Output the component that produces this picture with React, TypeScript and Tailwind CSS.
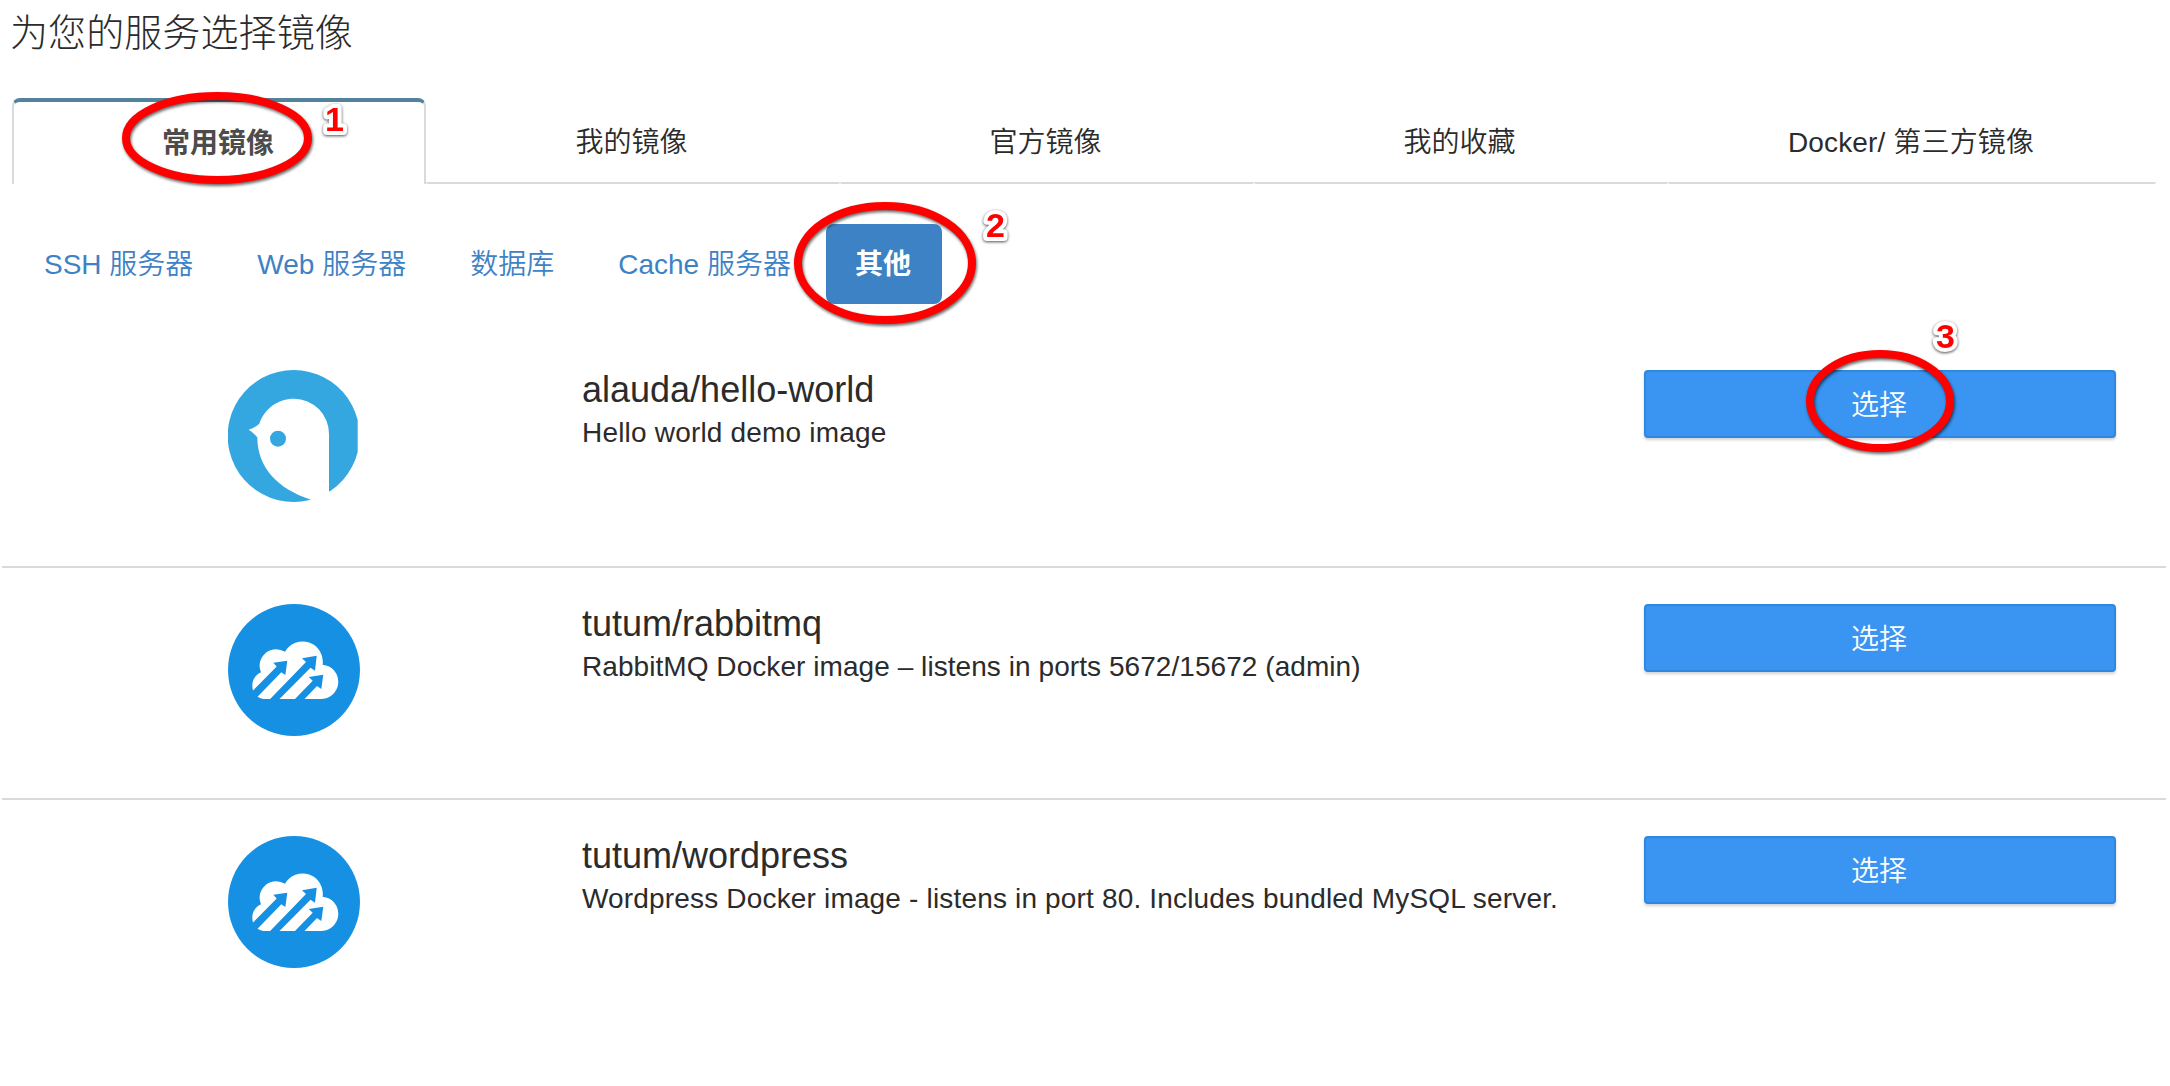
import React from "react";

function Ring({ w, h, className }: { w: number; h: number; className: string }) {
  return (
    <svg
      className={`pointer-events-none absolute z-10 overflow-visible drop-shadow-[1px_2px_1.5px_rgba(0,0,0,0.6)] ${className}`}
      width={w}
      height={h}
    >
      <ellipse cx={w / 2} cy={h / 2} rx={w / 2 - 4} ry={h / 2 - 4} fill="none" stroke="#ff0000" strokeWidth="8" />
    </svg>
  );
}

function Mark({ n, className }: { n: number; className: string }) {
  return (
    <svg
      className={`pointer-events-none absolute z-10 overflow-visible font-['Liberation_Sans',sans-serif] text-[34px] font-bold drop-shadow-[0_1px_1.5px_rgba(0,0,0,0.7)] ${className}`}
      width="19"
      height="24"
    >
      <text x="0" y="24" fill="#ff0000" stroke="#ffffff" strokeWidth="8" strokeLinejoin="round" paintOrder="stroke">
        {n}
      </text>
    </svg>
  );
}

function BirdLogo() {
  return (
    <svg width="132" height="132" viewBox="0 0 132 132">
      <path d="M129.700 50A66 66 0 1 0 129.700 82Z" fill="#35a7e0" />
      <path
        d="M101 135V64A35.200 35.200 0 0 0 66 28.700C50 28.700 36.500 38.500 31.300 53.700Q27 57.500 20.700 59.700Q25.500 62.500 29.300 67.300C29.500 98 50 119 83 129.800V135Z"
        fill="#fff"
      />
      <circle cx="50" cy="68.700" r="8" fill="#35a7e0" />
    </svg>
  );
}

function CloudLogo() {
  return (
    <svg width="132" height="132" viewBox="0 0 132 132">
      <circle cx="66" cy="66" r="66" fill="#1690e2" />
      <path
        d="M37 95H91.500A17.100 17.100 0 0 0 94.600 60.700A20.200 20.200 0 0 0 57 47.800A16.500 16.500 0 0 0 33 68.300C27 71 24.300 76 24.300 81.700C24.300 90 30 95 37 95Z"
        fill="#fff"
      />
      <g fill="#1690e2">
        <path d="M59.300 56.700L45.300 58.700L48.700 62.500L23 88.500L29.300 93L53.300 68.300L57.300 71Z" />
        <path d="M88.700 51.700L74 54.300L78 58L41.200 96H50.500L82.500 63.700L87 66.700Z" />
        <path d="M95.300 70.700L80.700 73L84.700 76.700L66 96H75.500L89 82L93.300 85Z" />
      </g>
    </svg>
  );
}

const tabs = ["我的镜像", "官方镜像", "我的收藏"];
const categories = ["SSH 服务器", "Web 服务器", "数据库", "Cache 服务器"];
const images = [
  {
    name: "alauda/hello-world",
    text: "Hello world demo image",
    tracking: "tracking-[0.19px]",
    logo: <BirdLogo />,
  },
  {
    name: "tutum/rabbitmq",
    text: "RabbitMQ Docker image – listens in ports 5672/15672 (admin)",
    tracking: "tracking-[0.06px]",
    logo: <CloudLogo />,
  },
  {
    name: "tutum/wordpress",
    text: "Wordpress Docker image - listens in port 80. Includes bundled MySQL server.",
    tracking: "tracking-[0.17px]",
    logo: <CloudLogo />,
  },
];

export default function App() {
  return (
    <div className="h-[1086px] w-[2170px] overflow-hidden bg-white font-['Liberation_Sans','Noto_Sans_CJK_SC',sans-serif] text-[28px] leading-[40px] text-[#2b2b2b]">
      <h1 className="flex h-[98px] items-start pt-[5px] pl-[10px] text-[38px] leading-[56px] font-light tracking-[0.1px]">
        为您的服务选择镜像
      </h1>

      <nav className="flex h-[86px] pl-[12px]">
        <div className="relative flex w-[414px] items-center justify-center rounded-t-[8px] border-x-2 border-t-4 border-x-[#dadada] border-t-[#53839a] pt-[2px] pr-[2px] font-bold text-[#4c4c4c]">
          常用镜像
          <Ring w={190} h={92} className="top-[-10px] left-[108px]" />
          <Mark n={1} className="top-[5px] left-[311px]" />
        </div>
        {tabs.map((t) => (
          <div
            key={t}
            className="flex w-[414px] items-center justify-center rounded-[2px] border-b-2 border-[#dadada] pt-[6px] pr-[3px] font-[350]"
          >
            {t}
          </div>
        ))}
        <div className="flex w-[488px] items-center justify-center rounded-[2px] border-b-2 border-[#dadada] pt-[6px] pr-[2px] font-[350] tracking-[0.15px]">
          Docker/ 第三方镜像
        </div>
      </nav>

      <div className="mt-[40px] flex h-[80px] gap-[4px] pl-[14px] text-[#3e82c6]">
        {categories.map((c) => (
          <div key={c} className="flex items-center px-[30px] pt-[2px] font-[350] whitespace-nowrap">
            {c}
          </div>
        ))}
        <div className="relative ml-px flex items-center rounded-[8px] bg-[#3e82c6] pt-[2px] pr-[31px] pl-[29px] font-bold text-white">
          其他
          <Ring w={182} h={122} className="top-[-22px] left-[-32px]" />
          <Mark n={2} className="top-[-11px] left-[160px]" />
        </div>
      </div>

      <div className="mt-[28px] mr-[4px] ml-[2px]">
        {images.map((img, i) => (
          <section
            key={img.name}
            className="flex h-[232px] items-start border-b-2 border-[#dadada] pt-[36px] pl-[226px] first:h-[236px] first:pt-[38px] last:border-b-0"
          >
            <div className="w-[354px]">{img.logo}</div>
            <div className="w-[1062px]">
              <h2 className="text-[36px] leading-[40px]">{img.name}</h2>
              <p className={`mt-[3px] whitespace-nowrap ${img.tracking}`}>{img.text}</p>
            </div>
            <button className="relative flex h-[68px] w-[472px] items-center justify-center rounded-[4px] border-2 border-[#3087df] bg-[#3994f2] pt-[3px] pr-[2px] font-[350] text-white shadow-[0_2px_3px_rgba(0,0,0,0.18)]">
              选择
              {i === 0 && <Ring w={148} h={102} className="top-[-22px] left-[160px]" />}
              {i === 0 && <Mark n={3} className="top-[-48px] left-[290px]" />}
            </button>
          </section>
        ))}
      </div>
    </div>
  );
}
